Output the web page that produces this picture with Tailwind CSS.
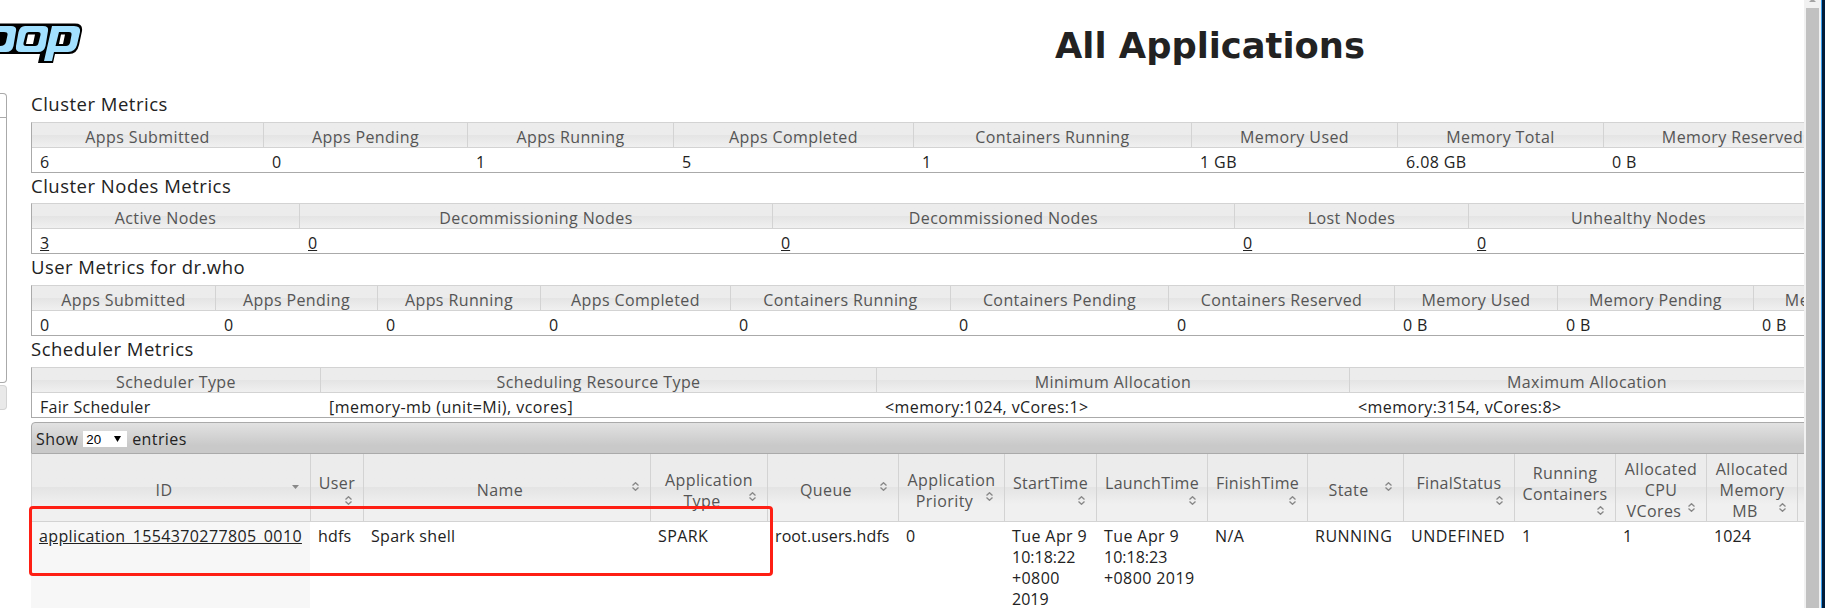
<!DOCTYPE html>
<html lang="en">
<head>
<meta charset="utf-8">
<title>All Applications</title>
<script src="https://cdn.jsdelivr.net/npm/@tailwindcss/browser@4"></script>
</head>
<body class="w-[1825px] h-[608px] overflow-hidden bg-white font-['Open_Sans',sans-serif] text-[16px] leading-[21px] tracking-[.4px] text-[#222]">
<div class="flex h-[608px] w-[1825px]">
  <aside class="w-[31px] shrink-0">
    <div class="h-[93px] pt-[23px]">
      <svg class="block" width="84" height="42" viewBox="0 0 84 42">
        <path d="M-4 .5H75Q83 .5 82 8L79 22Q77 31 69 31H55L53 40H38L40 31H-4Z" fill="#000"/>
        <path d="M-4 3H11Q17 3 16 8L13.500 23Q12 29 6 29H-4V23H0Q5 23 6 19L7.500 12Q8 9 4 9H-4Z" fill="#a2e0ff"/>
        <path fill-rule="evenodd" d="M25 3H43Q49 3 48 8L45.500 23Q44 29 38 29H21Q15 29 16 23L18.500 9Q20 3 25 3ZM29 9Q26 9 25.500 12L23.500 20Q23 23 26 23H35Q38 23 38.500 20L40.500 12Q41 9 38 9Z" fill="#a2e0ff"/>
        <path fill-rule="evenodd" d="M52 3H74Q81 3 80 9L77 22Q75 29 68 29H54L52 38H44ZM59 9L55.500 23H66Q69 23 70 20L71.500 12Q72 9 69 9Z" fill="#a2e0ff"/>
        <path d="M28 11.500H35L33 21H26ZM61 11.500H65L63 21H59Z" fill="#fff"/>
      </svg>
    </div>
    <div class="h-[290px] w-[7px] rounded-r-[4px] border border-l-0 border-[#aaa]"><div class="h-[24px] border-b border-[#aaa]"></div></div>
    <div class="mt-[2px] h-[25px] w-[7px] rounded-r-[4px] border border-l-0 border-[#d3d3d3] bg-[#e9e9e9]"></div>
  </aside>
  <main class="-ml-[4px] w-[1777px] shrink-0 overflow-hidden pl-[4px]">
    <h1 class="h-[92px] w-[2358px] pt-[21px] text-center font-['DejaVu_Sans',sans-serif] text-[35.300px] leading-[50px] font-bold tracking-normal">All Applications</h1>

    <h2 class="h-[30px] text-[18.500px] leading-[24px] tracking-[.5px]">Cluster Metrics</h2>
    <section class="h-[51px] w-[2000px] border border-[#aaa] border-t-[#d3d3d3]">
      <div class="grid h-[25px] grid-cols-[232px_204px_206px_240px_278px_206px_206px_258px_1fr] grid-rows-[24px] divide-x divide-[#d3d3d3] border-b border-[#d3d3d3] bg-linear-to-b from-[#ececec] from-50% via-[#e4e4e4] via-50% to-[#f0f0f0] text-center leading-[28px] text-[#555]">
        <div>Apps Submitted</div><div>Apps Pending</div><div>Apps Running</div><div>Apps Completed</div><div>Containers Running</div><div>Memory Used</div><div>Memory Total</div><div>Memory Reserved</div><div></div>
      </div>
      <div class="grid h-[24px] grid-cols-[232px_204px_206px_240px_278px_206px_206px_258px_1fr] leading-[28px] [&>div]:pl-[8px]">
        <div>6</div><div>0</div><div>1</div><div>5</div><div>1</div><div>1 GB</div><div>6.08 GB</div><div>0 B</div>
      </div>
    </section>

    <h2 class="h-[30px] text-[18.500px] leading-[26px] tracking-[.5px]">Cluster Nodes Metrics</h2>
    <section class="h-[51px] w-[2000px] border border-[#aaa] border-t-[#d3d3d3]">
      <div class="grid h-[25px] grid-cols-[268px_473px_462px_234px_340px_1fr] grid-rows-[24px] divide-x divide-[#d3d3d3] border-b border-[#d3d3d3] bg-linear-to-b from-[#ececec] from-50% via-[#e4e4e4] via-50% to-[#f0f0f0] text-center leading-[28px] text-[#555]">
        <div>Active Nodes</div><div>Decommissioning Nodes</div><div>Decommissioned Nodes</div><div>Lost Nodes</div><div>Unhealthy Nodes</div><div></div>
      </div>
      <div class="grid h-[24px] grid-cols-[268px_473px_462px_234px_340px_1fr] leading-[28px] tracking-normal underline [&>div]:pl-[8px]">
        <div>3</div><div>0</div><div>0</div><div>0</div><div>0</div>
      </div>
    </section>

    <h2 class="h-[31px] text-[18.500px] leading-[26px] tracking-[.45px]">User Metrics for dr.who</h2>
    <section class="h-[51px] w-[2000px] border border-[#aaa] border-t-[#d3d3d3]">
      <div class="grid h-[25px] grid-cols-[184px_162px_163px_190px_220px_218px_226px_163px_196px_204px_1fr] grid-rows-[24px] divide-x divide-[#d3d3d3] border-b border-[#d3d3d3] bg-linear-to-b from-[#ececec] from-50% via-[#e4e4e4] via-50% to-[#f0f0f0] text-center leading-[28px] text-[#555]">
        <div>Apps Submitted</div><div>Apps Pending</div><div>Apps Running</div><div>Apps Completed</div><div>Containers Running</div><div>Containers Pending</div><div>Containers Reserved</div><div>Memory Used</div><div>Memory Pending</div><div>Memory Reserved</div><div></div>
      </div>
      <div class="grid h-[24px] grid-cols-[184px_162px_163px_190px_220px_218px_226px_163px_196px_204px_1fr] leading-[28px] [&>div]:pl-[8px]">
        <div>0</div><div>0</div><div>0</div><div>0</div><div>0</div><div>0</div><div>0</div><div>0 B</div><div>0 B</div><div>0 B</div>
      </div>
    </section>

    <h2 class="h-[31px] text-[18.500px] leading-[26px] tracking-[.5px]">Scheduler Metrics</h2>
    <section class="h-[51px] w-[2000px] border border-[#aaa] border-t-[#d3d3d3]">
      <div class="grid h-[25px] grid-cols-[289px_556px_473px_475px_1fr] grid-rows-[24px] divide-x divide-[#d3d3d3] border-b border-[#d3d3d3] bg-linear-to-b from-[#ececec] from-50% via-[#e4e4e4] via-50% to-[#f0f0f0] text-center leading-[28px] text-[#555]">
        <div>Scheduler Type</div><div>Scheduling Resource Type</div><div>Minimum Allocation</div><div>Maximum Allocation</div><div></div>
      </div>
      <div class="grid h-[24px] grid-cols-[289px_556px_473px_475px_1fr] leading-[28px] [&>div]:pl-[8px]">
        <div class="tracking-[.3px]">Fair Scheduler</div><div class="tracking-[.48px]">[memory-mb (unit=Mi), vcores]</div><div>&lt;memory:1024, vCores:1&gt;</div><div>&lt;memory:3154, vCores:8&gt;</div>
      </div>
    </section>

    <div class="mt-[4px] flex h-[32px] w-[2000px] items-center rounded-tl-[4px] border border-[#aaa] bg-linear-to-b from-[#e2e2e2] to-[#c9c9c9] to-75% pt-[2px] pl-[4px]">
      <span>Show</span>
      <span class="mx-[5px] flex h-[16px] w-[44px] items-center justify-between bg-white pr-[6px] pl-[3px] font-['Liberation_Sans',sans-serif] text-[13.330px] tracking-normal text-black">20<svg width="7" height="6" viewBox="0 0 7 6"><path d="M0 0H7L3.500 6Z" fill="#000"/></svg></span>
      <span>entries</span>
    </div>
    <div class="grid h-[68px] w-[2000px] grid-cols-[279px_53px_287px_117px_131px_106px_92px_111px_100px_96px_111px_101px_91px_91px_1fr] border-b border-l border-[#d3d3d3] bg-linear-to-b from-[#ececec] from-50% via-[#e4e4e4] via-50% to-[#f0f0f0] to-75% text-center text-[#555] [&>div]:relative [&>div]:flex [&>div]:items-center [&>div]:justify-center [&>div]:border-r [&>div]:border-[#d3d3d3]">
      <div class="pt-[5px] pr-[14px]">ID<svg class="absolute top-[31px] right-[11px]" width="7" height="4" viewBox="0 0 7 4"><path d="M0 0H7L3.500 4Z" fill="#888"/></svg></div>
      <div class="pb-[9px]">User<svg class="absolute top-[42px] right-[11px]" width="7" height="9" viewBox="0 0 7 9"><path d="M.5 3.500L3.500.7L6.500 3.500M.5 5.500L3.500 8.300L6.500 5.500" fill="none" stroke="#888" stroke-width="1.300"/></svg></div>
      <div class="pt-[5px] pr-[14px]">Name<svg class="absolute top-[28px] right-[11px]" width="7" height="9" viewBox="0 0 7 9"><path d="M.5 3.500L3.500.7L6.500 3.500M.5 5.500L3.500 8.300L6.500 5.500" fill="none" stroke="#888" stroke-width="1.300"/></svg></div>
      <div class="pt-[5px]"><p>Application<br><span class="pr-[14px]">Type</span></p><svg class="absolute top-[38px] right-[11px]" width="7" height="9" viewBox="0 0 7 9"><path d="M.5 3.500L3.500.7L6.500 3.500M.5 5.500L3.500 8.300L6.500 5.500" fill="none" stroke="#888" stroke-width="1.300"/></svg></div>
      <div class="pt-[5px] pr-[14px]">Queue<svg class="absolute top-[28px] right-[11px]" width="7" height="9" viewBox="0 0 7 9"><path d="M.5 3.500L3.500.7L6.500 3.500M.5 5.500L3.500 8.300L6.500 5.500" fill="none" stroke="#888" stroke-width="1.300"/></svg></div>
      <div class="pt-[5px]"><p>Application<br><span class="pr-[14px]">Priority</span></p><svg class="absolute top-[38px] right-[11px]" width="7" height="9" viewBox="0 0 7 9"><path d="M.5 3.500L3.500.7L6.500 3.500M.5 5.500L3.500 8.300L6.500 5.500" fill="none" stroke="#888" stroke-width="1.300"/></svg></div>
      <div class="pb-[9px] tracking-[.3px]">StartTime<svg class="absolute top-[42px] right-[11px]" width="7" height="9" viewBox="0 0 7 9"><path d="M.5 3.500L3.500.7L6.500 3.500M.5 5.500L3.500 8.300L6.500 5.500" fill="none" stroke="#888" stroke-width="1.300"/></svg></div>
      <div class="pb-[9px] tracking-[.3px]">LaunchTime<svg class="absolute top-[42px] right-[11px]" width="7" height="9" viewBox="0 0 7 9"><path d="M.5 3.500L3.500.7L6.500 3.500M.5 5.500L3.500 8.300L6.500 5.500" fill="none" stroke="#888" stroke-width="1.300"/></svg></div>
      <div class="pb-[9px] tracking-[.3px]">FinishTime<svg class="absolute top-[42px] right-[11px]" width="7" height="9" viewBox="0 0 7 9"><path d="M.5 3.500L3.500.7L6.500 3.500M.5 5.500L3.500 8.300L6.500 5.500" fill="none" stroke="#888" stroke-width="1.300"/></svg></div>
      <div class="pt-[5px] pr-[14px]">State<svg class="absolute top-[28px] right-[11px]" width="7" height="9" viewBox="0 0 7 9"><path d="M.5 3.500L3.500.7L6.500 3.500M.5 5.500L3.500 8.300L6.500 5.500" fill="none" stroke="#888" stroke-width="1.300"/></svg></div>
      <div class="pb-[9px] tracking-[.3px]">FinalStatus<svg class="absolute top-[42px] right-[11px]" width="7" height="9" viewBox="0 0 7 9"><path d="M.5 3.500L3.500.7L6.500 3.500M.5 5.500L3.500 8.300L6.500 5.500" fill="none" stroke="#888" stroke-width="1.300"/></svg></div>
      <div class="pb-[9px]"><p>Running<br>Containers</p><svg class="absolute top-[52px] right-[11px]" width="7" height="9" viewBox="0 0 7 9"><path d="M.5 3.500L3.500.7L6.500 3.500M.5 5.500L3.500 8.300L6.500 5.500" fill="none" stroke="#888" stroke-width="1.300"/></svg></div>
      <div class="pt-[5px]"><p>Allocated<br>CPU<br><span class="pr-[14px]">VCores</span></p><svg class="absolute top-[49px] right-[11px]" width="7" height="9" viewBox="0 0 7 9"><path d="M.5 3.500L3.500.7L6.500 3.500M.5 5.500L3.500 8.300L6.500 5.500" fill="none" stroke="#888" stroke-width="1.300"/></svg></div>
      <div class="pt-[5px]"><p>Allocated<br>Memory<br><span class="pr-[14px]">MB</span></p><svg class="absolute top-[49px] right-[11px]" width="7" height="9" viewBox="0 0 7 9"><path d="M.5 3.500L3.500.7L6.500 3.500M.5 5.500L3.500 8.300L6.500 5.500" fill="none" stroke="#888" stroke-width="1.300"/></svg></div>
      <div></div>
    </div>
    <div class="relative grid h-[86px] w-[2000px] grid-cols-[279px_53px_287px_117px_131px_106px_92px_111px_100px_96px_111px_101px_91px_91px_1fr] [&>div]:pt-[4px] [&>div]:pl-[8px]">
      <div class="bg-[#f7f7f7] tracking-[.37px]"><span class="underline">application_1554370277805_0010</span></div><div class="tracking-[.2px]">hdfs</div><div class="tracking-[.3px]">Spark shell</div><div>SPARK</div><div class="tracking-[.1px]">root.users.hdfs</div><div>0</div><div>Tue Apr 9<br><span class="tracking-normal">10:18:22</span><br>+0800<br><span class="tracking-normal">2019</span></div><div>Tue Apr 9<br><span class="tracking-normal">10:18:23</span><br>+0800 2019</div><div>N/A</div><div class="tracking-[.5px]">RUNNING</div><div class="tracking-[.5px]">UNDEFINED</div><div>1</div><div>1</div><div class="tracking-[.1px]">1024</div>
      <span class="absolute -top-[16px] -left-[2px] h-[70px] w-[744px] rounded-[4px] border-3 border-[#fe1f14]"></span>
    </div>
  </main>
  <div class="w-[17px] shrink-0 bg-[#f1f1f1] pl-[2px]">
    <svg class="block" width="13" height="8" viewBox="0 0 13 8"><path d="M5 0H8L10 2H3Z" fill="#a3a3a3"/></svg>
    <div class="h-[600px] w-[13px] bg-[#c1c1c1]"></div>
  </div>
  <div class="w-[4px] shrink-0 border-l border-[#3aa0ee] bg-[#001c3a]"></div>
</div>
</body>
</html>
